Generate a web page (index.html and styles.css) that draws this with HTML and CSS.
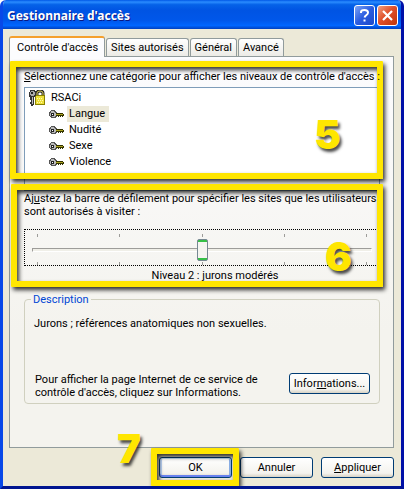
FILE: index.html
```html
<!DOCTYPE html>
<html lang="fr">
  <head>
    <meta charset="UTF-8">
    <meta name="viewport" content="width=device-width, initial-scale=1.0">
    <title>Gestionnaire d'accès</title>
    <link rel="stylesheet" href="styles.css">
  </head>
<body>
  <svg width="0" height="0" class="symboles" aria-hidden="true">
    <symbol id="cle" viewBox="0 0 15 9">
      <path d="M2 0h4v1h1v1h1v5h-1v1h-5v-1h-1v-1h-1v-4h1v-1h1z" fill="#555"/>
      <path d="M2 1h3v1h1v1h1v3h-1v1h-3v-1h-2v-3h1z" fill="#bbb"/>
      <path d="M2 3h3v3h-3z" fill="#222"/>
      <path d="M3 4h1v1h-1z" fill="#fff"/>
      <path d="M7 3h7v1h1v2h-1v1h-1v-1h-1v1h-1v-1h-1v1h-1v-1h-2z" fill="#333300"/>
      <path d="M7 4h7v1h-7z" fill="#a8a020"/>
    </symbol>
  </svg>

  <div class="fenetre">
    <div class="barre-titre">
      <h1>Gestionnaire d'accès</h1>
      <button class="bouton-titre" aria-label="Aide">
        <svg viewBox="0 0 19 19"><path d="M6 7V6q0-2 3.500-2t3.500 2.500q0 1.500-1.500 2.500t-2 2.500M9.500 13.500v2" fill="none" stroke="#fff" stroke-width="2"/></svg>
      </button>
      <button class="bouton-titre fermer" aria-label="Fermer">
        <svg viewBox="0 0 19 19"><path d="M5 5l9 9M14 5l-9 9" fill="none" stroke="#fff" stroke-width="2.200"/></svg>
      </button>
    </div>

    <div class="contenu">
      <div class="onglets" role="tablist">
        <button class="onglet actif" role="tab" aria-selected="true">Contrôle d'accès</button>
        <button class="onglet" role="tab">Sites autorisés</button>
        <button class="onglet" role="tab">Général</button>
        <button class="onglet" role="tab">Avancé</button>
      </div>

      <div class="panneau">
        <section class="categories">
          <p class="consigne"><u>S</u>électionnez une catégorie pour afficher les niveaux de contrôle d'accès :</p>
          <div class="arbre">
            <div class="racine">
              <svg class="icone-racine" viewBox="0 0 16 16" aria-hidden="true">
                <path d="M8 6V3q0-2 3-2t3 2v3" fill="none" stroke="#222" stroke-width="3"/>
                <path d="M8 6V3q0-2 3-2t3 2v3" fill="none" stroke="#ddd05a"/>
                <path d="M6 5h10v10h-10z" fill="#8a8200"/>
                <path d="M7 6h8v8h-8z" fill="#eee03a"/>
                <path d="M8 8h1v1h-1zm2 0h1v1h-1zm2 0h1v1h-1zM9 10h1v1h-1zm2 0h1v1h-1zm2 0h1v1h-1zM8 12h1v1h-1zm2 0h1v1h-1zm2 0h1v1h-1z" fill="#fff9b0"/>
                <path d="M1 0h5v1h1v5h-1v1h-1v8h-1v1h-2v-2h-1v-2h1v-2h-1v-3h-1v-5h1z" fill="#333"/>
                <path d="M2 1h3v1h1v3h-1v1h-3v-1h-1v-3h1z" fill="#aaa"/>
                <path d="M2 2h2v2h-2z" fill="#222"/>
                <path d="M3 7h1v7h-1z" fill="#bbb"/>
              </svg>
              <span>RSACi</span>
            </div>
            <ul>
              <li class="choisi"><svg class="icone-cle"><use href="#cle"/></svg><span>Langue</span></li>
              <li><svg class="icone-cle"><use href="#cle"/></svg><span>Nudité</span></li>
              <li><svg class="icone-cle"><use href="#cle"/></svg><span>Sexe</span></li>
              <li><svg class="icone-cle"><use href="#cle"/></svg><span>Violence</span></li>
            </ul>
          </div>
          <div class="cadre"></div>
          <span class="numero">5</span>
        </section>

        <section class="niveau">
          <label class="consigne" for="niveau">Aj<u>u</u>stez la barre de défilement pour spécifier les sites que les utilisateurs<br>sont autorisés à visiter :</label>
          <div class="reglage">
            <div class="graduations"><i></i><i></i><i></i><i></i><i></i></div>
            <input type="range" id="niveau" min="0" max="4" value="2">
            <div class="graduations"><i></i><i></i><i></i><i></i><i></i></div>
          </div>
          <p class="valeur">Niveau 2 : jurons modérés</p>
          <div class="cadre"></div>
          <span class="numero">6</span>
        </section>

        <fieldset class="description">
          <legend>Description</legend>
          <p>Jurons ; références anatomiques non sexuelles.</p>
          <div class="infos">
            <p>Pour afficher la page Internet de ce service de contrôle d'accès, cliquez sur Informations.</p>
            <button class="bouton">Infor<u>m</u>ations...</button>
          </div>
        </fieldset>
      </div>

      <div class="actions">
        <div class="validation">
          <button class="bouton defaut">OK</button>
          <div class="cadre"></div>
          <span class="numero">7</span>
        </div>
        <button class="bouton">Annuler</button>
        <button class="bouton"><u>A</u>ppliquer</button>
      </div>
    </div>
  </div>
</body>
</html>
```

FILE: styles.css
```css
:root {
  --fond: #ece9d8;
  --bordure: #919b9c;
  --jaune: #ffe600;
}

* {
  box-sizing: border-box;
}

body {
  margin: 0;
  background: #fff;
  font-family: Roboto, Tahoma, sans-serif;
  font-size: 11px;
  line-height: 13px;
  color: #000;
}

p, ul, h1 {
  margin: 0;
  padding: 0;
}

button {
  font: inherit;
  color: inherit;
  padding: 0;
}

.symboles {
  position: absolute;
}

.fenetre {
  background: var(--fond);
  border: solid #0831d9;
  border-width: 0 3px 3px;
  border-color: #0831d9 #0010a8 #001590 #0848e8;
  border-radius: 6px 6px 0 0;
  overflow: hidden;
}

.barre-titre {
  display: flex;
  align-items: center;
  gap: 4px;
  height: 29px;
  margin: 0 -3px;
  padding: 2px 6px 0 7px;
  background: linear-gradient(#0058e6 0%, #2a8cff 7%, #0562e8 16%, #0054e3 35%, #0057ea 70%, #0066ff 88%, #0040c0 100%);
}

.barre-titre h1 {
  flex: 1;
  font-family: "Noto Sans", sans-serif;
  font-size: 12px;
  line-height: 16px;
  font-weight: bold;
  color: #fff;
  text-shadow: 1px 1px 0 #0a1883;
}

.bouton-titre {
  width: 21px;
  height: 21px;
  border: 1px solid #fff;
  border-radius: 3px;
  background: linear-gradient(135deg, #7da4f5, #2a5ce0 50%, #1c49c8);
}

.bouton-titre svg {
  display: block;
  width: 19px;
  height: 19px;
}

.bouton-titre.fermer {
  margin-left: -2px;
  background: linear-gradient(135deg, #f0a080, #e0502a 45%, #c03408);
}

.contenu {
  padding: 7px 7px 8px 6px;
}

.onglets {
  display: flex;
  align-items: flex-end;
  gap: 1px;
}

.onglet {
  height: 18px;
  padding: 0 4px;
  border: 1px solid var(--bordure);
  border-bottom: none;
  border-radius: 3px 3px 0 0;
  background: linear-gradient(#fff, #ecebe6);
}

.onglet.actif {
  position: relative;
  height: 21px;
  margin-bottom: -1px;
  padding: 0 6px 0 7px;
  border-top: 2px solid #f5a02c;
  background: #fcfcfe;
}

.panneau {
  padding: 13px 13px 43px 14px;
  border: 1px solid var(--bordure);
  background: linear-gradient(#fcfcfe, #f4f3ee 70%);
}

.categories,
.niveau,
.validation {
  position: relative;
}

/* le texte passe au-dessus du cadre jaune */
.consigne {
  display: block;
  position: relative;
  z-index: 1;
  white-space: nowrap;
}

.arbre {
  height: 104px;
  margin-top: 4px;
  padding: 2px 4px;
  border: 1px solid #7f9db9;
  background: #fff;
}

.racine,
.arbre li {
  display: flex;
  align-items: center;
  height: 16px;
}

.racine span,
.arbre li span {
  padding: 1px 2px 2px;
}

.racine {
  gap: 4px;
}

.arbre ul {
  padding-left: 20px;
  list-style: none;
}

.arbre li {
  gap: 3px;
}

.arbre .choisi span {
  padding-right: 4px;
  background: var(--fond);
}

.icone-racine {
  width: 16px;
  height: 16px;
}

.icone-cle {
  width: 15px;
  height: 9px;
}

/* cadres jaunes posés sur les zones à remplir */
.cadre {
  position: absolute;
  inset: -9px -3px 12px -14px;
  border: 6px solid var(--jaune);
  border-radius: 1px;
  box-shadow: 2px 3px 4px rgba(0, 0, 0, 0.8), inset 2px 3px 4px rgba(0, 0, 0, 0.8);
  pointer-events: none;
}

.niveau .cadre {
  inset: -8px -3px -5px -13px;
}

.validation .cadre {
  inset: -9px -7px -8px -8px;
}

.numero {
  position: absolute;
  font-family: Inter, sans-serif;
  font-size: 40px;
  line-height: 40px;
  font-weight: 900;
  color: var(--jaune);
  text-shadow: 2px 3px 3px rgba(0, 0, 0, 0.7);
}

.categories .numero {
  right: 39px;
  top: 45px;
}

.niveau .numero {
  right: 28px;
  top: 45px;
}

.validation .numero {
  right: 91px;
  top: -28px;
}

.niveau {
  margin-top: 1px;
}

.reglage {
  height: 37px;
  margin-top: 11px;
  padding: 4px 7px 0;
  border: 1px dotted #000;
}

.graduations {
  display: flex;
  justify-content: space-between;
  height: 3px;
  padding: 0 5px;
}

.graduations i {
  width: 1px;
  background: #9d9c99;
}

.reglage input {
  display: block;
  width: 100%;
  height: 25px;
  margin: 0;
  background: none;
  appearance: none;
}

.reglage input::-webkit-slider-runnable-track {
  height: 4px;
  border: 1px solid #9d9c99;
  border-color: #9d9c99 #fff #fff #9d9c99;
  background: #f0efe8;
}

.reglage input::-webkit-slider-thumb {
  width: 11px;
  height: 22px;
  margin-top: -10px;
  border: 1px solid #778892;
  border-radius: 2px;
  background: linear-gradient(#36c046 2px, #f5f5f0 2px, #f5f5f0 18px, #36c046 18px);
  appearance: none;
}

.valeur {
  margin-top: 3px;
  padding-left: 26px;
  text-align: center;
}

.description {
  min-width: 0;
  margin: 11px 0 0;
  padding: 11px 9px 4px;
  border: 1px solid #d0d0bf;
  border-radius: 4px;
}

.description legend {
  margin-left: -3px;
  padding: 0 2px;
  color: #0046d5;
}

.infos {
  display: flex;
  align-items: flex-start;
  justify-content: space-between;
  gap: 12px;
  margin-top: 43px;
}

.infos p {
  flex: 1;
  padding-left: 1px;
}

.bouton {
  width: 73px;
  height: 21px;
  border: 1px solid #003c74;
  border-radius: 3px;
  background: linear-gradient(#fff, #f4f3ee 80%, #d8d2c4);
}

.infos .bouton {
  width: 81px;
}

.bouton.defaut {
  display: block;
  box-shadow: inset 0 1px 0 #cee7ff, inset 0 -2px 0 #6982ee, inset 2px 0 0 #bcd4f6, inset -2px 0 0 #89ade4;
}

.actions {
  display: flex;
  justify-content: flex-end;
  gap: 8px;
  margin-top: 9px;
}
```
